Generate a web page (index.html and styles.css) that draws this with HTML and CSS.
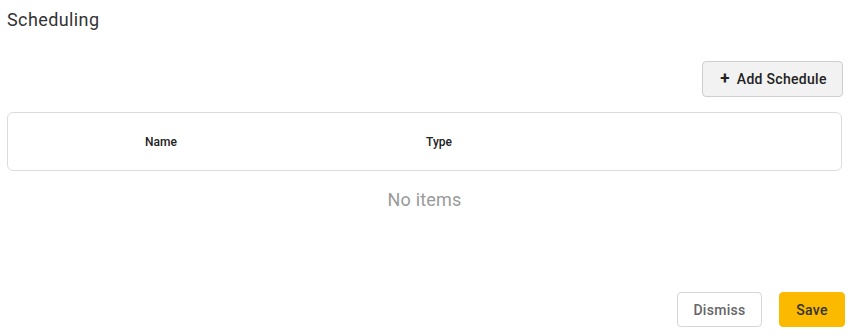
FILE: index.html
```html
<!DOCTYPE html>
<html>
<head>
<meta charset="utf-8">
<link rel="stylesheet" href="styles.css">
</head>
<body>
<div class="page">
  <h1 class="title">Scheduling</h1>
  <div class="toolbar">
    <button class="btn btn-add"><span class="plus">+</span>Add Schedule</button>
  </div>
  <div class="table">
    <div class="th th-name">Name</div>
    <div class="th th-type">Type</div>
  </div>
  <div class="empty">No items</div>
  <div class="footer">
    <button class="btn btn-dismiss">Dismiss</button>
    <button class="btn btn-save">Save</button>
  </div>
</div>
</body>
</html>
```
FILE: styles.css
```css
html, body {
  margin: 0;
  padding: 0;
  background: #fff;
}
body {
  font-family: Roboto, "Liberation Sans", sans-serif;
  color: #222;
}
.page {
  width: 853px;
  height: 336px;
  box-sizing: border-box;
  padding: 7px 8px 0 7px;
  display: flex;
  flex-direction: column;
}
.title {
  margin: 0;
  font-size: 18px;
  font-weight: 400;
  color: #333;
  line-height: 26px;
  letter-spacing: 0.4px;
}
.toolbar {
  display: flex;
  justify-content: flex-end;
  margin-top: 28px;
  padding-right: 2px;
}
.btn {
  font-family: Roboto, "Liberation Sans", sans-serif;
  font-size: 14px;
  font-weight: 500;
  border-radius: 4px;
  box-sizing: border-box;
  cursor: pointer;
  letter-spacing: 0.3px;
}
.btn-add {
  width: 141px;
  height: 36px;
  background: #f2f2f2;
  border: 1px solid #cfcfcf;
  color: #222;
  display: flex;
  align-items: center;
  justify-content: center;
  gap: 7px;
  padding: 0 0 0 2px;
}
.plus {
  font-size: 17px;
  font-weight: 700;
  line-height: 1;
  margin-top: -2px;
}
.table {
  margin-top: 15px;
  height: 59px;
  box-sizing: border-box;
  border: 1px solid #dcdcdc;
  border-radius: 6px;
  display: grid;
  grid-template-columns: 306px 250px 1fr;
  align-items: center;
  margin-right: 3px;
}
.th {
  font-size: 12px;
  font-weight: 500;
  color: #222;
  text-align: center;
}
.empty {
  margin-top: 17px;
  text-align: center;
  font-size: 18px;
  color: #9a9a9a;
  line-height: 24px;
  padding-right: 3px;
  letter-spacing: 0.2px;
}
.footer {
  margin-top: auto;
  margin-bottom: 9px;
  display: flex;
  justify-content: flex-end;
  gap: 17px;
}
.btn-dismiss {
  width: 85px;
  height: 35px;
  background: #fff;
  border: 1px solid #d6d6d6;
  color: #666;
}
.btn-save {
  width: 66px;
  height: 35px;
  background: #fbb900;
  border: 1px solid #fbb900;
  color: #333;
}
```
